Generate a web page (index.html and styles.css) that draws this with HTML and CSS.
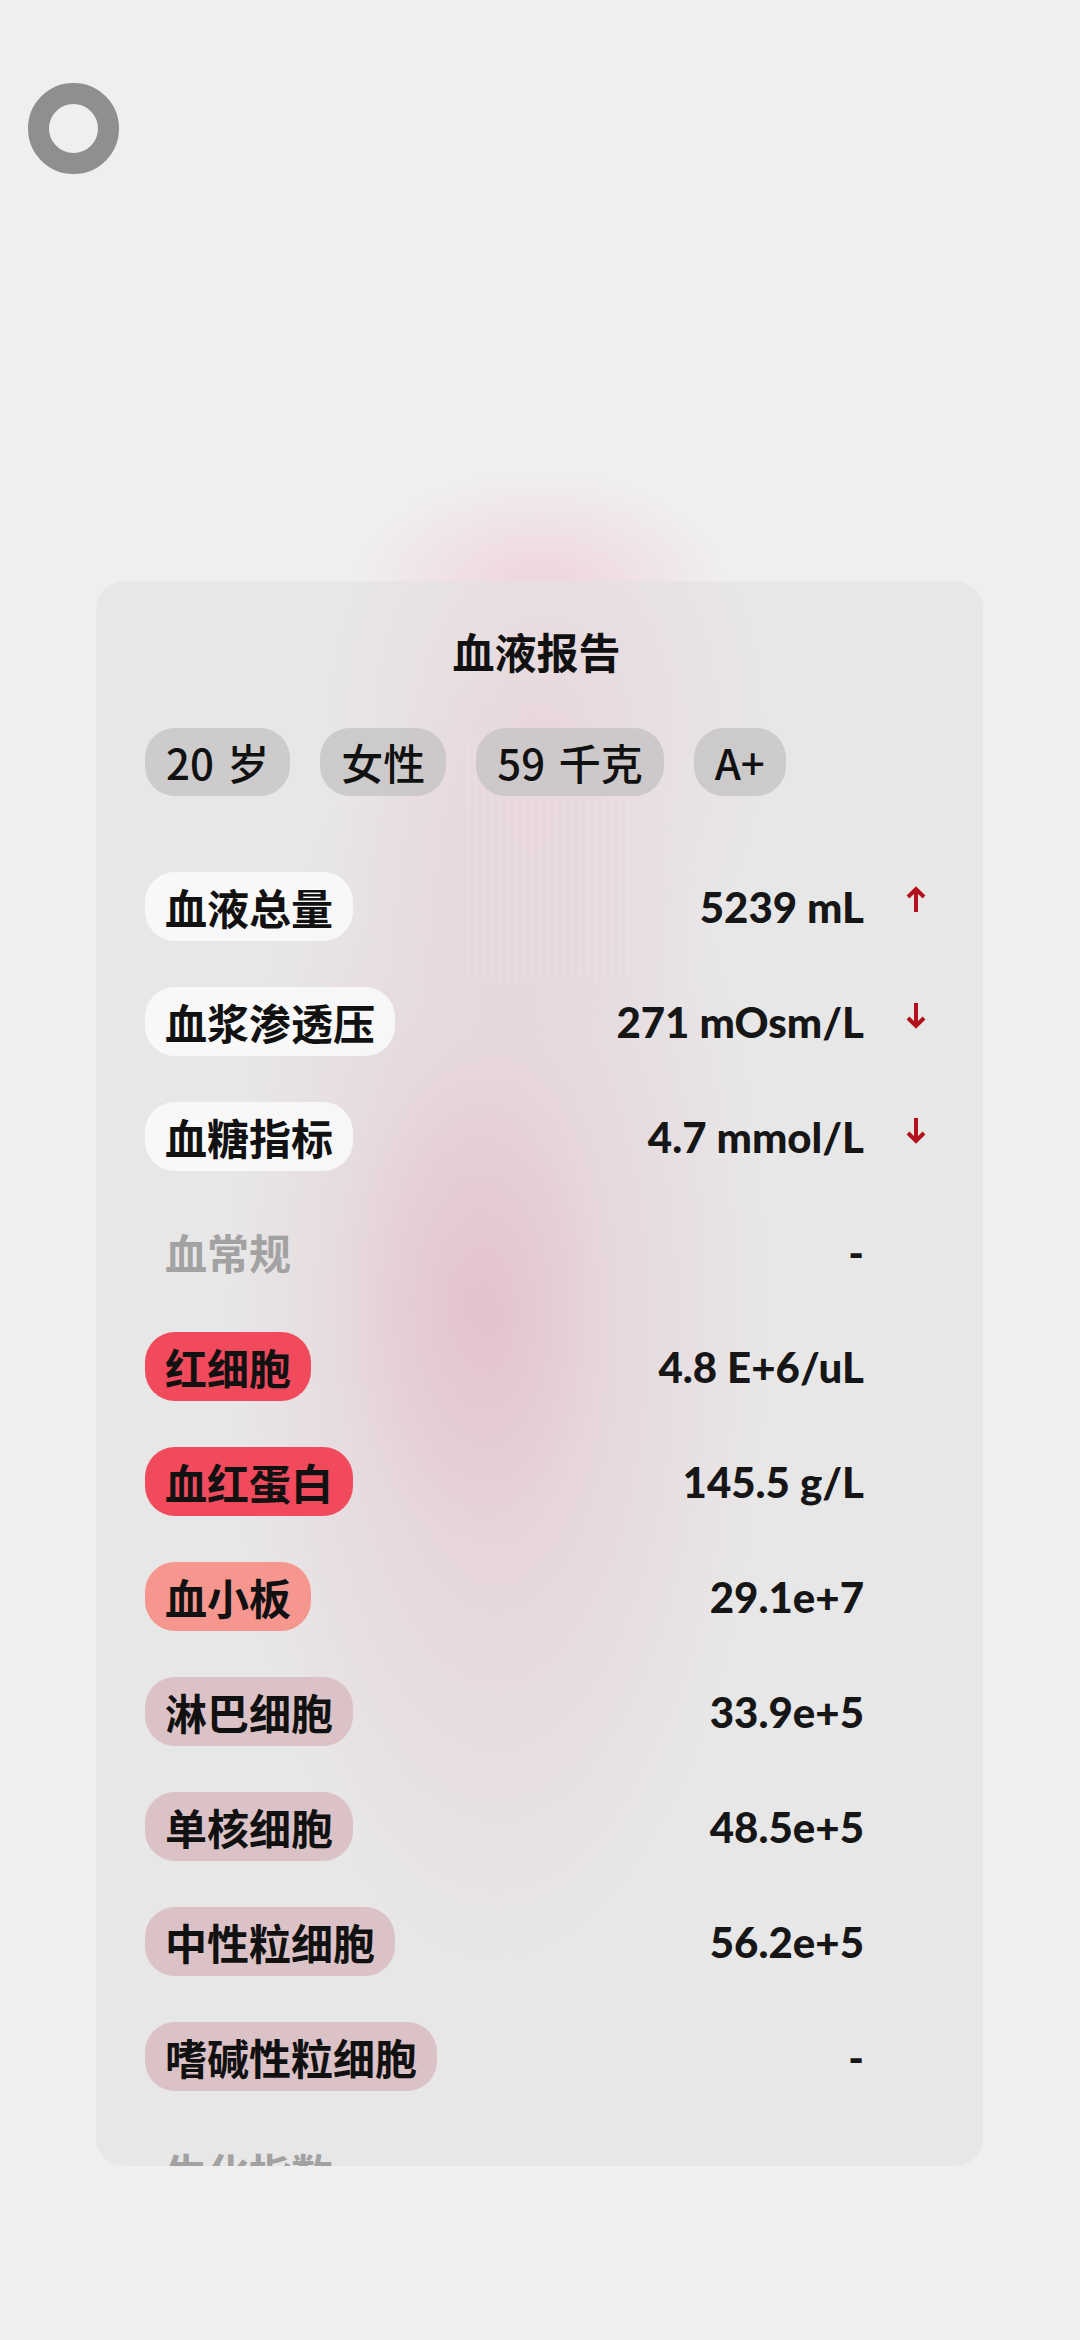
FILE: index.html
```html
<!DOCTYPE html>
<html lang="zh-CN">
<head>
  <meta charset="UTF-8" />
  <meta name="viewport" content="width=device-width, initial-scale=1.0" />
  <title>血液报告</title>
  <link rel="stylesheet" href="styles.css">
</head>
<body>
  <div class="topbar">
    <svg class="ring" width="91" height="91" viewBox="0 0 91 91">
      <circle cx="45.5" cy="45.5" r="35" fill="none" stroke="#8f8f8f" stroke-width="21" />
    </svg>
  </div>

  <div class="report">
    <h2 class="report-title">血液报告</h2>
    <div class="profile">
      <span class="tag">20 岁</span>
      <span class="tag">女性</span>
      <span class="tag">59 千克</span>
      <span class="tag">A+</span>
    </div>

    <div class="rows">
      <div class="row">
        <span class="label label-light">血液总量</span>
        <span class="value">5239 mL</span>
        <span class="trend">
          <svg width="24" height="28" viewBox="0 0 24 28"><path d="M12 26V3M4 11l8-8 8 8" /></svg>
        </span>
      </div>
      <div class="row">
        <span class="label label-light">血浆渗透压</span>
        <span class="value">271 mOsm/L</span>
        <span class="trend">
          <svg width="24" height="28" viewBox="0 0 24 28"><path d="M12 2v23M4 17l8 8 8-8" /></svg>
        </span>
      </div>
      <div class="row">
        <span class="label label-light">血糖指标</span>
        <span class="value">4.7 mmol/L</span>
        <span class="trend">
          <svg width="24" height="28" viewBox="0 0 24 28"><path d="M12 2v23M4 17l8 8 8-8" /></svg>
        </span>
      </div>
      <div class="row">
        <span class="label label-section">血常规</span>
        <span class="value">-</span>
        <span class="trend"></span>
      </div>
      <div class="row">
        <span class="label label-red">红细胞</span>
        <span class="value">4.8 E+6/uL</span>
        <span class="trend"></span>
      </div>
      <div class="row">
        <span class="label label-red">血红蛋白</span>
        <span class="value">145.5 g/L</span>
        <span class="trend"></span>
      </div>
      <div class="row">
        <span class="label label-salmon">血小板</span>
        <span class="value">29.1e+7</span>
        <span class="trend"></span>
      </div>
      <div class="row">
        <span class="label label-dusty">淋巴细胞</span>
        <span class="value">33.9e+5</span>
        <span class="trend"></span>
      </div>
      <div class="row">
        <span class="label label-dusty">单核细胞</span>
        <span class="value">48.5e+5</span>
        <span class="trend"></span>
      </div>
      <div class="row">
        <span class="label label-dusty">中性粒细胞</span>
        <span class="value">56.2e+5</span>
        <span class="trend"></span>
      </div>
      <div class="row">
        <span class="label label-dusty">嗜碱性粒细胞</span>
        <span class="value">-</span>
        <span class="trend"></span>
      </div>
      <div class="row">
        <span class="label label-section">生化指数</span>
      </div>
    </div>
  </div>
</body>
</html>
```

FILE: styles.css
```css
body {
  margin: 0;
  font-family: "Noto Sans CJK SC", "Noto Sans", sans-serif;
  color: #111;
  background:
    radial-gradient(ellipse 190px 120px at 540px 590px, rgba(238, 178, 192, 0.45), rgba(238, 178, 192, 0) 100%),
    #f0eff0;
  min-height: 2340px;
}
.topbar {
  height: 174px;
  padding-left: 28px;
  box-sizing: border-box;
  padding-top: 83px;
}
.ring {
  display: block;
}
.report {
  margin: 407px 0 0 96px;
  width: 887px;
  height: 1585px;
  box-sizing: border-box;
  padding: 40px 55px 0 49px;
  overflow: hidden;
  border-radius: 28px;
  background:
    repeating-linear-gradient(90deg, rgba(255, 255, 255, 0.07) 0 3px, rgba(255, 255, 255, 0) 3px 8px) 370px 160px / 170px 240px no-repeat,
    radial-gradient(ellipse 140px 240px at 370px 720px, rgba(222, 160, 178, 0.22), rgba(222, 160, 178, 0) 100%),
    radial-gradient(ellipse 270px 640px at 400px 740px, rgba(226, 176, 190, 0.5), rgba(226, 176, 190, 0) 100%),
    radial-gradient(ellipse 230px 320px at 450px 150px, rgba(232, 192, 202, 0.4), rgba(232, 192, 202, 0) 100%),
    #e8e7e8;
}
.report-title {
  margin: 0;
  font-size: 42px;
  line-height: 60px;
  font-weight: 700;
  text-align: center;
}
.profile {
  display: flex;
  gap: 30px;
  margin-top: 47px;
}
.tag {
  background: rgba(200, 198, 199, 0.85);
  border-radius: 30px;
  padding: 0 21px;
  height: 68px;
  line-height: 68px;
  font-size: 42px;
  font-weight: 500;
  word-spacing: 4px;
}
.rows {
  display: flex;
  flex-direction: column;
  gap: 46px;
  margin-top: 76px;
}
.row {
  display: flex;
  align-items: center;
  height: 69px;
}
.label {
  height: 69px;
  line-height: 69px;
  padding: 0 20px;
  border-radius: 30px;
  font-size: 42px;
  font-weight: 700;
  white-space: nowrap;
}
.label-light {
  background: rgba(250, 249, 250, 0.9);
}
.label-section {
  color: #a3a2a3;
}
.label-red {
  background: #f04a5c;
}
.label-salmon {
  background: #f6978f;
}
.label-dusty {
  background: #dbc2c6;
}
.value {
  margin-left: auto;
  font-family: Lato, "Liberation Sans", sans-serif;
  font-weight: 900;
  font-size: 42px;
  color: #161616;
  white-space: nowrap;
}
.trend {
  width: 24px;
  margin-left: 40px;
  height: 28px;
  margin-bottom: 14px;
}
.trend svg {
  display: block;
}
.trend path {
  fill: none;
  stroke: #b3121c;
  stroke-width: 4;
  stroke-linecap: butt;
  stroke-linejoin: miter;
}
```
